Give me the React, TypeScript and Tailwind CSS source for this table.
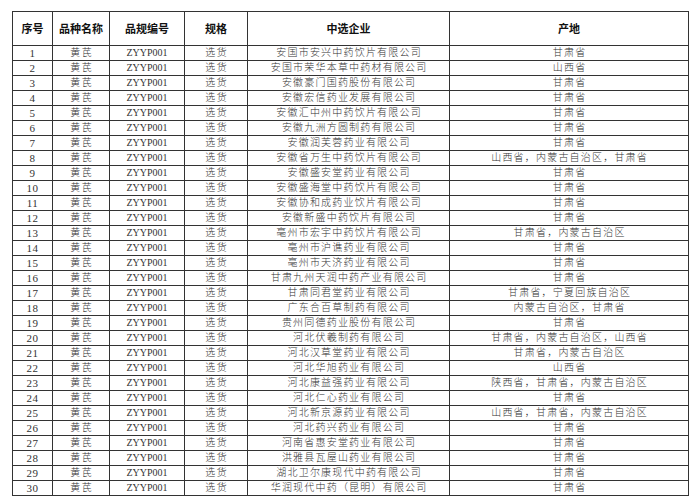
import React from "react";

const rows: [string, string][] = [
  ["安国市安兴中药饮片有限公司", "甘肃省"],
  ["安国市荣华本草中药材有限公司", "山西省"],
  ["安徽豪门国药股份有限公司", "甘肃省"],
  ["安徽宏信药业发展有限公司", "甘肃省"],
  ["安徽汇中州中药饮片有限公司", "甘肃省"],
  ["安徽九洲方圆制药有限公司", "甘肃省"],
  ["安徽润芙蓉药业有限公司", "甘肃省"],
  ["安徽省万生中药饮片有限公司", "山西省，内蒙古自治区，甘肃省"],
  ["安徽盛安堂药业有限公司", "甘肃省"],
  ["安徽盛海堂中药饮片有限公司", "甘肃省"],
  ["安徽协和成药业饮片有限公司", "甘肃省"],
  ["安徽新盛中药饮片有限公司", "甘肃省"],
  ["亳州市宏宇中药饮片有限公司", "甘肃省，内蒙古自治区"],
  ["亳州市沪谯药业有限公司", "甘肃省"],
  ["亳州市天济药业有限公司", "甘肃省"],
  ["甘肃九州天润中药产业有限公司", "甘肃省"],
  ["甘肃同君堂药业有限公司", "甘肃省，宁夏回族自治区"],
  ["广东合百草制药有限公司", "内蒙古自治区，甘肃省"],
  ["贵州同德药业股份有限公司", "甘肃省"],
  ["河北伏羲制药有限公司", "甘肃省，内蒙古自治区，山西省"],
  ["河北汉草堂药业有限公司", "甘肃省，内蒙古自治区"],
  ["河北华旭药业有限公司", "山西省"],
  ["河北康益强药业有限公司", "陕西省，甘肃省，内蒙古自治区"],
  ["河北仁心药业有限公司", "甘肃省"],
  ["河北新京源药业有限公司", "山西省，甘肃省，内蒙古自治区"],
  ["河北药兴药业有限公司", "甘肃省"],
  ["河南省惠安堂药业有限公司", "甘肃省"],
  ["洪雅县瓦屋山药业有限公司", "甘肃省"],
  ["湖北卫尔康现代中药有限公司", "甘肃省"],
  ["华润现代中药（昆明）有限公司", "甘肃省"],
];

const dataFont = {};

export default function App() {
  return (
    <div className="w-[700px] h-[497px] bg-white overflow-hidden pt-[11px] pl-[12px]">
      <div className="w-[677px] border-l border-t border-[#333] font-['Liberation_Serif','Noto_Sans_CJK_SC',serif] text-[#333]">
        <div className="flex h-[34px] border-b border-[#333] font-['Noto_Sans_CJK_SC',sans-serif] font-bold text-[11px] text-[#111]">
          <div className="w-[40px] border-r border-[#333] flex items-center justify-center">序号</div>
          <div className="w-[57px] border-r border-[#333] flex items-center justify-center">品种名称</div>
          <div className="w-[75px] border-r border-[#333] flex items-center justify-center">品规编号</div>
          <div className="w-[63px] border-r border-[#333] flex items-center justify-center">规格</div>
          <div className="w-[202px] border-r border-[#333] flex items-center justify-center">中选企业</div>
          <div className="w-[239px] border-r border-[#333] flex items-center justify-center">产地</div>
        </div>
        {rows.map(([company, origin], i) => (
          <div key={i} className="flex h-[15px] border-b border-[#333] text-[10px] leading-[14px]">
            <div className="w-[40px] border-r border-[#333] flex items-center justify-center text-[11px] tracking-[0.5px]">{i + 1}</div>
            <div className="w-[57px] border-r border-[#333] flex items-center justify-center tracking-[1.5px] pl-[1.5px] font-light">黄芪</div>
            <div className="w-[75px] border-r border-[#333] flex items-center justify-center">ZYYP001</div>
            <div className="w-[63px] border-r border-[#333] flex items-center justify-center tracking-[1.5px] pl-[1.5px] font-light">选货</div>
            <div className="w-[202px] border-r border-[#333] flex items-center justify-center tracking-[1.2px] pl-[1.2px] font-light whitespace-nowrap">{company}</div>
            <div className="w-[239px] border-r border-[#333] flex items-center justify-center tracking-[1.2px] pl-[1.2px] font-light whitespace-nowrap">{origin}</div>
          </div>
        ))}
      </div>
    </div>
  );
}
